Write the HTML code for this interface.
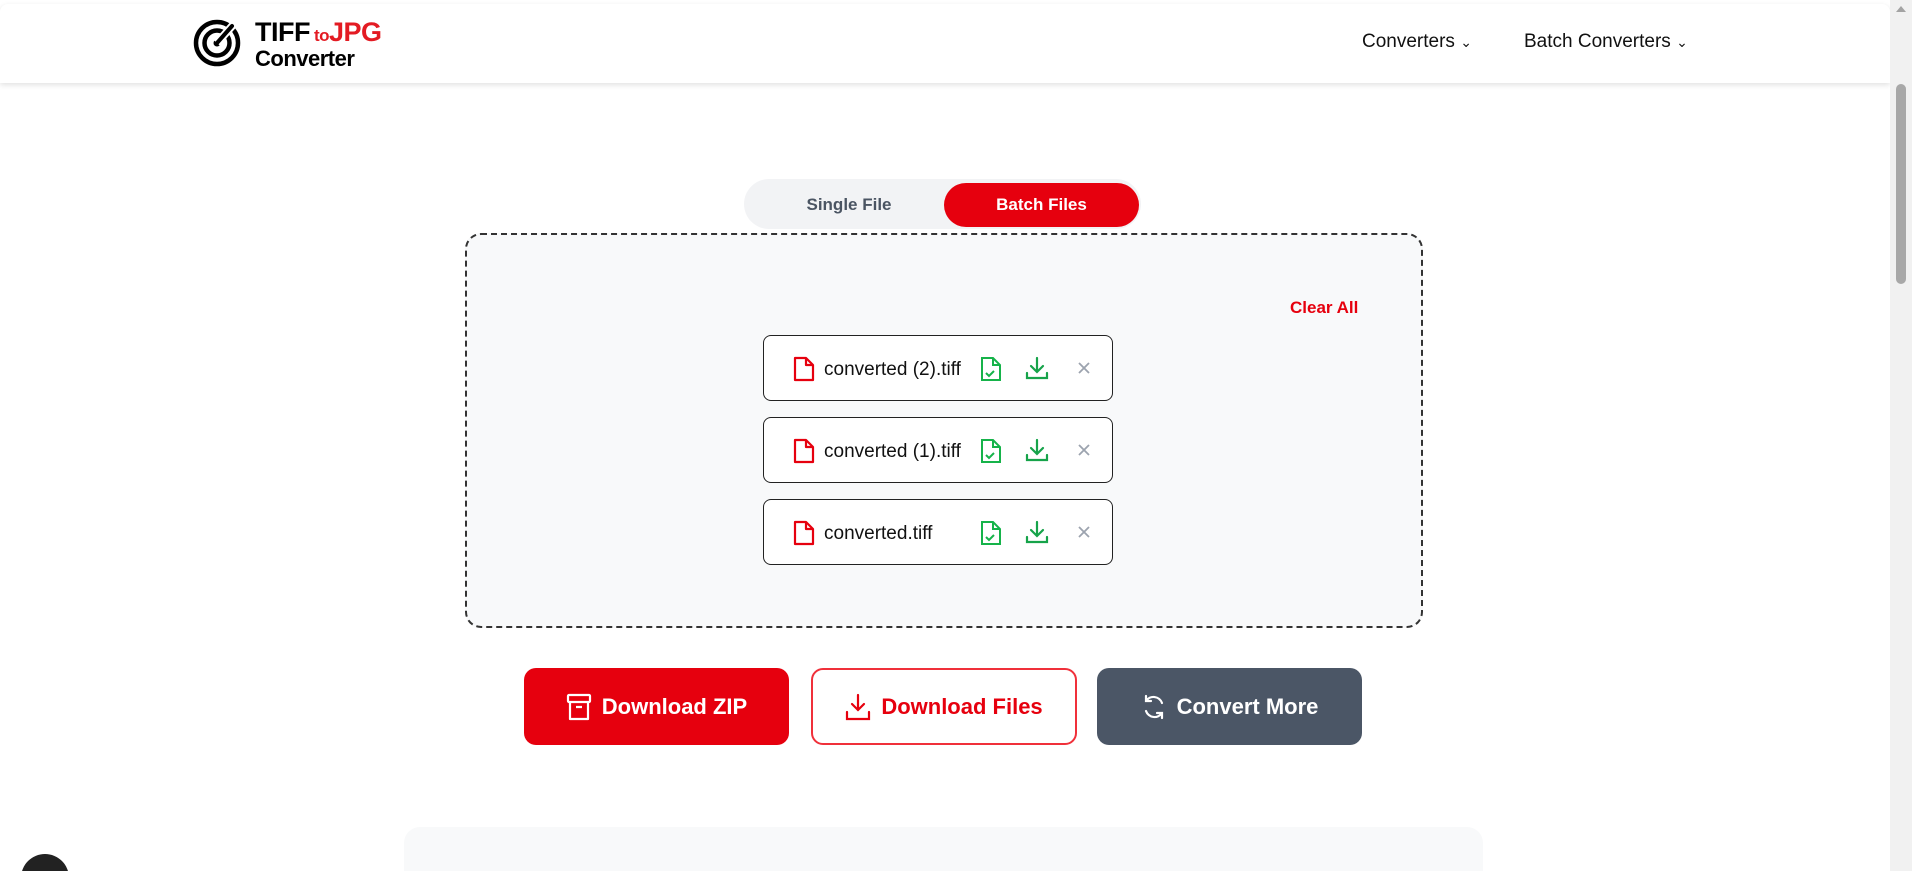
<!DOCTYPE html>
<html><head><meta charset="utf-8"><style>
*{box-sizing:border-box;margin:0;padding:0}
html,body{width:1912px;height:871px;overflow:hidden;background:#fff;font-family:"Liberation Sans",sans-serif}
.wrap{position:relative;width:1912px;height:871px;overflow:hidden}
.header{position:absolute;left:0;top:4px;width:1890px;height:79px;background:#fff;box-shadow:0 2px 6px rgba(0,0,0,.12);border-radius:8px 8px 0 0}
.sb{position:absolute;right:0;top:0;width:22px;height:871px;background:#f1f1f1}
.sb .th{position:absolute;left:6px;top:84px;width:10px;height:200px;background:#a8a8a8;border-radius:5px}
.sb .ar{position:absolute;left:6px;top:6px;width:0;height:0;border-left:5px solid transparent;border-right:5px solid transparent;border-bottom:6px solid #a3a3a3}
.logo{position:absolute;left:193px;top:18px}
.lt{position:absolute;left:255px;top:19px;font-weight:bold;line-height:1;letter-spacing:-0.5px}
.nav{position:absolute;top:31px;font-size:19px;color:#111}
.toggle{position:absolute;left:744px;top:179px;width:397px;height:50px;background:#f2f3f5;border-radius:25px}
.toggle .a{position:absolute;left:200px;top:4px;width:195px;height:44px;background:#e6000e;border-radius:22px;color:#fff;font-weight:bold;font-size:17px;text-align:center;line-height:44px}
.toggle .s{position:absolute;left:20px;top:4px;width:170px;text-align:center;line-height:44px;color:#4b5563;font-weight:bold;font-size:17px}
.drop{position:absolute;left:465px;top:233px;width:958px;height:395px;border:2px dashed #333;border-radius:16px;background:#f8f9fa}
.clear{position:absolute;left:1290px;top:298px;color:#e6000e;font-weight:bold;font-size:17px}
.item{position:absolute;left:763px;width:350px;height:66px;border:1.5px solid #222;border-radius:8px;background:#fff}
.item .n{position:absolute;left:60px;top:23px;font-size:19px;color:#111}
.item svg{position:absolute}
.btn{position:absolute;top:668px;height:77px;border-radius:12px;font-weight:bold;font-size:22px;display:flex;align-items:center;justify-content:center;gap:10px}
.bottom{position:absolute;left:404px;top:827px;width:1079px;height:60px;background:#f8f9fa;border-radius:16px}
</style></head><body><div class="wrap">
<div class="header"></div>
<svg class="logo" width="48" height="49" viewBox="0 0 48 49"><circle cx="24" cy="25" r="21" fill="none" stroke="#000" stroke-width="4.5"/><circle cx="24" cy="25" r="12.5" fill="none" stroke="#000" stroke-width="4.5"/><circle cx="24" cy="25" r="3.5" fill="#000"/><path d="M24 25 L40 7" stroke="#fff" stroke-width="8"/><path d="M24 25 L39 8" stroke="#000" stroke-width="4" stroke-linecap="round"/></svg>
<div class="lt"><span style="font-size:27px;color:#000">TIFF</span> <span style="font-size:17px;color:#e31b23">to</span><span style="font-size:27px;color:#e31b23">JPG</span><br><span style="font-size:22px;color:#000;display:inline-block;margin-top:2px">Converter</span></div>
<div class="nav" style="left:1362px">Converters <span style="font-size:14px">&#8964;</span></div>
<div class="nav" style="left:1524px">Batch Converters <span style="font-size:14px">&#8964;</span></div>
<div class="sb"><div class="ar"></div><div class="th"></div></div>
<div class="toggle"><div class="s">Single File</div><div class="a">Batch Files</div></div>
<div class="drop"></div>
<div class="clear">Clear All</div>

<div class="item" style="top:335px">
<svg style="left:28px;top:20px" width="24" height="26" viewBox="0 0 24 26" fill="none" stroke="#e6000e" stroke-width="2.2" stroke-linejoin="round"><path d="M3 2h11l7 7v15H3z"/><path d="M14 2v7h7"/></svg>
<div class="n">converted (2).tiff</div>
<svg style="left:215px;top:20px" width="24" height="26" viewBox="0 0 24 26" fill="none" stroke="#16b34a" stroke-width="2"><path d="M3 2h11l7 7v15H3z"/><path d="M14 2v7h7"/><path d="M7 17l3 3 5-5"/></svg>
<svg style="left:261px;top:20px" width="24" height="24" viewBox="0 0 24 24" fill="none" stroke="#16a34a" stroke-width="2.2" stroke-linecap="round"><path d="M12 2v13M6 10l6 6 6-6M2 17v5h20v-5"/></svg>
<svg style="left:313px;top:25px" width="14" height="14" viewBox="0 0 14 14" stroke="#9ca3af" stroke-width="1.8"><path d="M2 2l10 10M12 2L2 12"/></svg>
</div>
<div class="item" style="top:417px">
<svg style="left:28px;top:20px" width="24" height="26" viewBox="0 0 24 26" fill="none" stroke="#e6000e" stroke-width="2.2" stroke-linejoin="round"><path d="M3 2h11l7 7v15H3z"/><path d="M14 2v7h7"/></svg>
<div class="n">converted (1).tiff</div>
<svg style="left:215px;top:20px" width="24" height="26" viewBox="0 0 24 26" fill="none" stroke="#16b34a" stroke-width="2"><path d="M3 2h11l7 7v15H3z"/><path d="M14 2v7h7"/><path d="M7 17l3 3 5-5"/></svg>
<svg style="left:261px;top:20px" width="24" height="24" viewBox="0 0 24 24" fill="none" stroke="#16a34a" stroke-width="2.2" stroke-linecap="round"><path d="M12 2v13M6 10l6 6 6-6M2 17v5h20v-5"/></svg>
<svg style="left:313px;top:25px" width="14" height="14" viewBox="0 0 14 14" stroke="#9ca3af" stroke-width="1.8"><path d="M2 2l10 10M12 2L2 12"/></svg>
</div>
<div class="item" style="top:499px">
<svg style="left:28px;top:20px" width="24" height="26" viewBox="0 0 24 26" fill="none" stroke="#e6000e" stroke-width="2.2" stroke-linejoin="round"><path d="M3 2h11l7 7v15H3z"/><path d="M14 2v7h7"/></svg>
<div class="n">converted.tiff</div>
<svg style="left:215px;top:20px" width="24" height="26" viewBox="0 0 24 26" fill="none" stroke="#16b34a" stroke-width="2"><path d="M3 2h11l7 7v15H3z"/><path d="M14 2v7h7"/><path d="M7 17l3 3 5-5"/></svg>
<svg style="left:261px;top:20px" width="24" height="24" viewBox="0 0 24 24" fill="none" stroke="#16a34a" stroke-width="2.2" stroke-linecap="round"><path d="M12 2v13M6 10l6 6 6-6M2 17v5h20v-5"/></svg>
<svg style="left:313px;top:25px" width="14" height="14" viewBox="0 0 14 14" stroke="#9ca3af" stroke-width="1.8"><path d="M2 2l10 10M12 2L2 12"/></svg>
</div>

<div class="btn" style="left:524px;width:265px;background:#e6000e;color:#fff">
<svg width="26" height="28" viewBox="0 0 26 28" fill="none" stroke="#fff" stroke-width="2.2" stroke-linejoin="round"><rect x="2" y="2" width="22" height="7" rx="1"/><path d="M4 9v17h18V9M10 14h6"/></svg>Download ZIP</div>
<div class="btn" style="left:811px;width:266px;background:#fff;border:2px solid #f0303a;color:#e6000e">
<svg width="26" height="28" viewBox="0 0 26 28" fill="none" stroke="#e6000e" stroke-width="2.2" stroke-linecap="round"><path d="M13 2v15M7 11l6 6 6-6M2 19v7h22v-7"/></svg>Download Files</div>
<div class="btn" style="left:1097px;width:265px;background:#4b5666;color:#fff">
<svg width="26" height="28" viewBox="0 0 26 28" fill="none" stroke="#fff" stroke-width="2.2" stroke-linecap="round"><path d="M21 10A9 9 0 0 0 5 8M5 3v5h5M5 18a9 9 0 0 0 16 2M21 25v-5h-5"/></svg>Convert More</div>

<div class="bottom"></div>
<div style="position:absolute;left:21px;top:854px;width:48px;height:48px;border-radius:50%;background:#222"></div>
</div></body></html>
